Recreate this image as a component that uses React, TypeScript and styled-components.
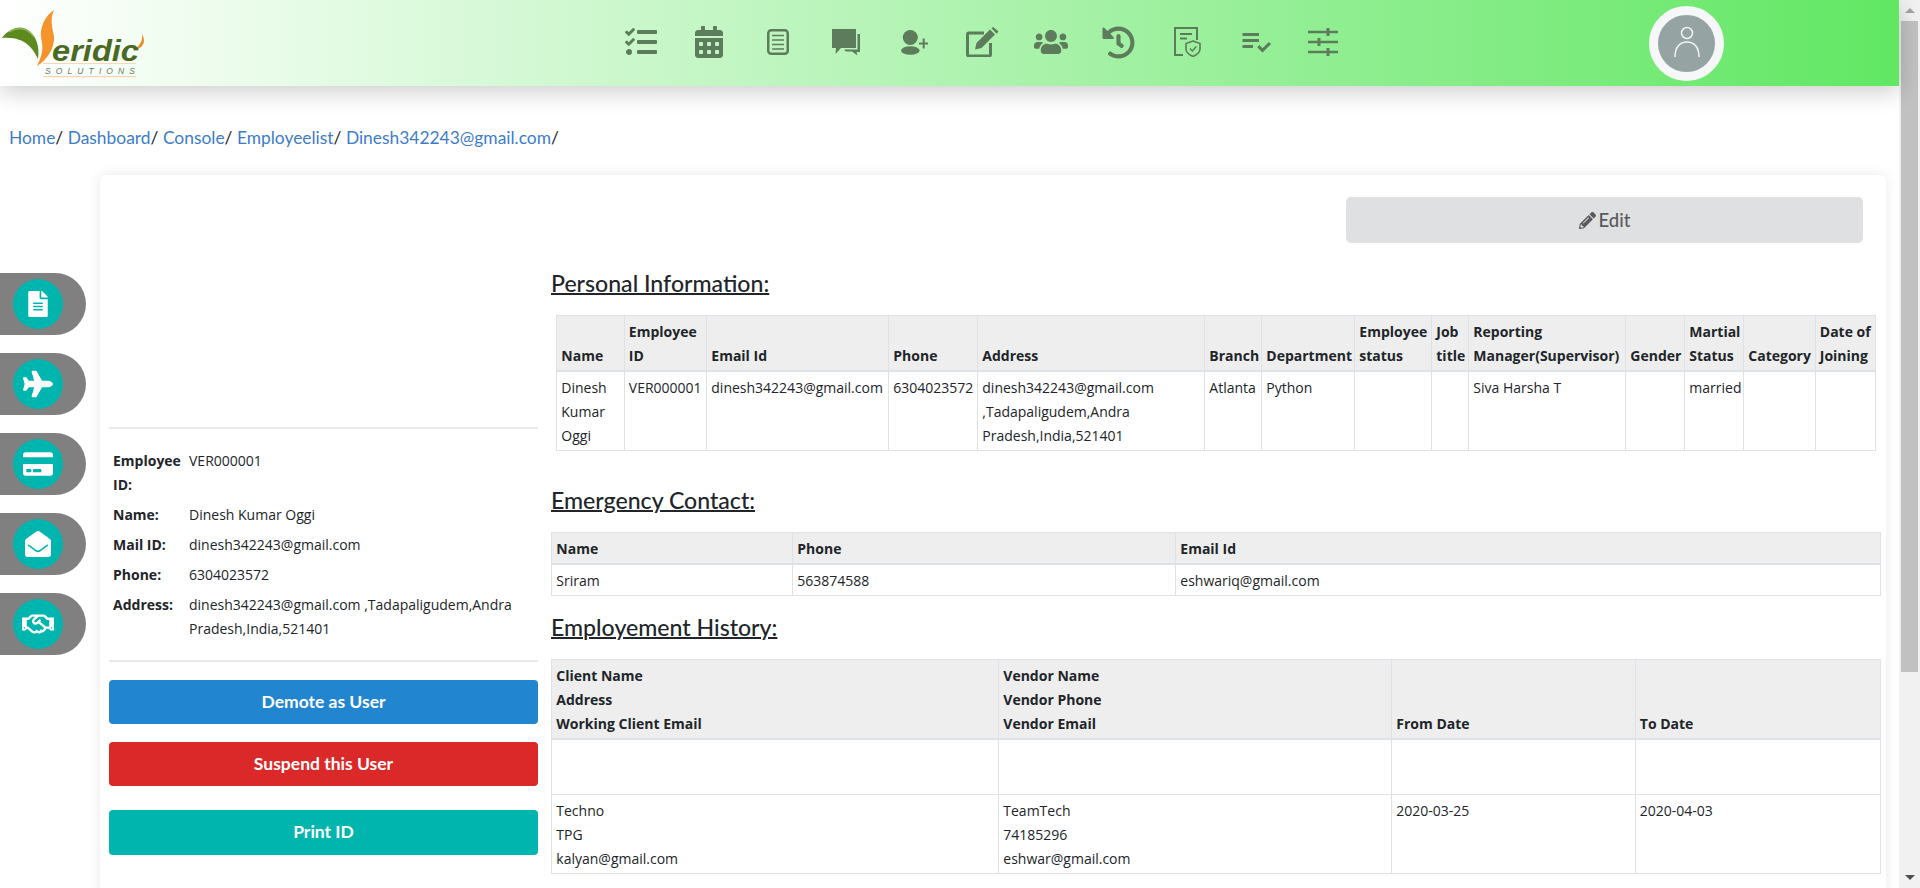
import React from 'react'
import styled, { createGlobalStyle } from 'styled-components'
import {
  FaTasks,
  FaCalendarAlt,
  FaUsers,
  FaHistory,
  FaPencilAlt,
  FaFileAlt,
  FaPlane,
  FaCreditCard,
  FaEnvelopeOpen,
  FaRegHandshake,
} from 'react-icons/fa'
import { MdPlaylistAddCheck } from 'react-icons/md'

const GlobalStyle = createGlobalStyle`
  html, body {
    margin: 0;
    padding: 0;
    height: 100%;
    overflow: hidden;
    background: #fff;
  }
  body {
    font-family: "Open Sans", "Liberation Sans", sans-serif;
    font-size: 14px;
    line-height: 24px;
    color: #212529;
  }
`

const Viewport = styled.div`
  display: flex;
  height: 888px;
  overflow: hidden;
`

const Page = styled.div`
  flex: 1;
  min-width: 0;
`

const Scrollbar = styled.div`
  width: 21px;
  flex: none;
  display: flex;
  flex-direction: column;
  background: #f1f1f1;
  padding: 0 2px;
  box-sizing: border-box;
`

const ScrollArrow = styled.div<{ $down?: boolean }>`
  height: 21px;
  flex: none;
  display: flex;
  align-items: center;
  justify-content: center;

  &::before {
    content: '';
    border-left: 5px solid transparent;
    border-right: 5px solid transparent;
    ${(p) => (p.$down ? 'border-top: 5px solid #505050;' : 'border-bottom: 5px solid #a3a3a3;')}
  }
`

const ScrollTrack = styled.div`
  flex: 1;
`

const ScrollThumb = styled.div`
  height: 651px;
  background: #c1c1c1;
`

const Header = styled.header`
  height: 86px;
  display: flex;
  align-items: center;
  background: linear-gradient(to right, #fff 0%, #61e763 100%);
  box-shadow: 0 6px 22px rgba(0, 0, 0, 0.2);
  position: relative;
`

const LogoBox = styled.div`
  width: 607px;
  flex: none;
  height: 86px;
`

const Nav = styled.nav`
  display: flex;
  width: 751px;
  flex: none;
`

const NavItem = styled.a`
  flex: 1;
  height: 86px;
  box-sizing: border-box;
  padding-bottom: 2px;
  display: flex;
  align-items: center;
  justify-content: center;
  color: #5c7c5c;
  font-size: 32px;
`

const Avatar = styled.div`
  margin-left: 291px;
  width: 75px;
  height: 75px;
  box-sizing: border-box;
  border: 9px solid #f5f7f8;
  border-radius: 50%;
  background: #95a3a3;
  display: flex;
  align-items: center;
  justify-content: center;
`

const Breadcrumb = styled.div`
  height: 89px;
  box-sizing: border-box;
  padding: 40px 0 0 9px;
  font-family: Lato, "Open Sans", sans-serif;
  font-size: 17.4px;
  line-height: 24px;
  color: #212529;

  a {
    color: #3d7cc9;
  }
`

const Main = styled.div`
  display: flex;
`

const SideTabs = styled.aside`
  width: 100px;
  flex: none;
  display: flex;
  flex-direction: column;
  gap: 18px;
  padding-top: 98px;
  box-sizing: border-box;
`

const SideTab = styled.a`
  width: 86px;
  height: 62px;
  display: flex;
  align-items: center;
  padding-left: 13px;
  box-sizing: border-box;
  background: #808080;
  border-radius: 0 31px 31px 0;
`

const TabCircle = styled.span`
  width: 50px;
  height: 50px;
  border-radius: 50%;
  background: #00b5ad;
  color: #fff;
  font-size: 26px;
  display: flex;
  align-items: center;
  justify-content: center;
`

const Card = styled.section`
  width: 1786px;
  min-height: 900px;
  box-sizing: border-box;
  display: grid;
  grid-template-columns: 429px 1fr;
  column-gap: 13px;
  padding: 22px 6px 0 9px;
  border-radius: 6px;
  background: #fff;
  box-shadow: 0 0 14px rgba(0, 0, 0, 0.09);
`

const Profile = styled.div`
  padding-top: 230px;
`

const Divider = styled.hr`
  margin: 0;
  border: 0;
  border-top: 2px solid #e9e9e9;
`

const InfoGrid = styled.dl`
  margin: 0;
  padding: 20px 0 19px 4px;
  display: grid;
  grid-template-columns: 76px 1fr;
  row-gap: 6px;
  font-size: 14px;
`

const InfoLabel = styled.dt`
  font-weight: 700;
`

const InfoValue = styled.dd`
  margin: 0;
`

const ActionButton = styled.button<{ $color: string; $top: number; $height?: number }>`
  display: block;
  width: 100%;
  height: ${(p) => p.$height ?? 44}px;
  margin-top: ${(p) => p.$top}px;
  padding: 0 0 2px;
  border: 0;
  border-radius: 4px;
  background: ${(p) => p.$color};
  color: #fff;
  font-family: Lato, sans-serif;
  font-size: 17.5px;
  font-weight: 700;
`

const Details = styled.div`
  min-width: 0;
`

const EditRow = styled.div`
  display: flex;
  justify-content: flex-end;
  padding-right: 17px;
`

const EditButton = styled.button`
  width: 517px;
  height: 46px;
  border: 0;
  border-radius: 5px;
  background: #dfe0e2;
  color: #5a5a5a;
  font-family: Lato, sans-serif;
  font-size: 18.5px;
  font-weight: 500;
  display: flex;
  align-items: center;
  justify-content: center;
  gap: 3px;

  svg {
    font-size: 17px;
  }
`

const SectionTitle = styled.h3<{ $top: number }>`
  margin: ${(p) => p.$top}px 0 16px;
  font-family: Lato, sans-serif;
  font-size: 23.1px;
  line-height: 32px;
  font-weight: 500;
  text-decoration: underline;
  text-decoration-thickness: 2px;
  color: #212529;
`

const DataTable = styled.table<{ $inset?: boolean }>`
  width: ${(p) => (p.$inset ? '1319px' : '1329px')};
  ${(p) => (p.$inset ? 'margin-left: 5px;' : '')}
  table-layout: fixed;
  border-collapse: collapse;
  font-size: 14px;
  line-height: 24px;

  th,
  td {
    padding: 3.6px 2px 2.4px 4.3px;
    border: 1px solid #dee2e6;
    vertical-align: top;
    text-align: left;
    box-sizing: border-box;
  }

  th {
    vertical-align: bottom;
    background: #eee;
    font-weight: 700;
    border-bottom-width: 2px;
  }
`

function CommentsIcon() {
  return (
    <svg width="28" height="26" viewBox="0 0 28 26" fill="currentColor">
      <path d="M0 0h24v19H9l-5.500 6 .5-6H0z" />
      <path d="M25.500 5H28v18h-3.500l1 3.500-5.500-4H14l-2-2h13.500z" />
    </svg>
  )
}

function NotesIcon() {
  return (
    <svg width="22" height="26" viewBox="0 0 22 26" fill="none" stroke="currentColor">
      <rect x="1.250" y="1.250" width="19.500" height="23.500" rx="3" strokeWidth="2.500" />
      <path d="M5 6.500h12M5 11h12M5 15.500h12M5 20h12" strokeWidth="1.500" />
    </svg>
  )
}

function UserPlusIcon() {
  return (
    <svg width="27" height="25" viewBox="0 0 27 25" fill="currentColor">
      <circle cx="9.300" cy="7.500" r="7.500" />
      <ellipse cx="9.300" cy="20.500" rx="9.300" ry="4.300" />
      <path d="M21.700 8.500h2V12.500h3.300v2h-3.300v4h-2v-4h-3.700v-2h3.700z" />
    </svg>
  )
}

function EditIcon() {
  return (
    <svg width="33" height="30" viewBox="0 0 33 30" fill="currentColor">
      <path
        d="M18 6H3a1.500 1.500 0 0 0-1.500 1.500v20A1.500 1.500 0 0 0 3 29h20a1.500 1.500 0 0 0 1.500-1.500V16"
        fill="none"
        stroke="currentColor"
        strokeWidth="3"
      />
      <path d="M9 22.500l1.500-6.500L24 2.500l5 5L15.500 21z" />
      <path d="M25.500 1.200l1.700-1.200 5.300 4.500-2 2.200z" />
    </svg>
  )
}

function DocShieldIcon() {
  return (
    <svg width="27" height="30" viewBox="0 0 27 30" fill="none" stroke="currentColor" strokeWidth="2">
      <path d="M9 28H1V1h22v12" />
      <path d="M6 7h12M6 11.500h7" />
      <path d="M19 14l7 2.500v5.500c0 3.500-3 5.800-7 7.500-4-1.700-7-4-7-7.500v-5.500z" strokeWidth="1.600" />
      <path d="M16 21.500l2.300 2.500 4-4.500" strokeWidth="1.500" />
    </svg>
  )
}

function SlidersIcon() {
  return (
    <svg width="31" height="30" viewBox="0 0 31 30" fill="none" stroke="currentColor">
      <path d="M0 5h30M0 15h30M0 25h30" strokeWidth="2.400" />
      <path d="M20 1v8M11 11v8M20 21v8" strokeWidth="3" />
    </svg>
  )
}

function Logo() {
  return (
    <svg width="150" height="86" viewBox="0 0 150 86">
      <path d="M2 38C8 29 20 24 28 30 36 35 40 47 38 59 33 48 24 36 2 38z" fill="#5c8a1e" />
      <path d="M9 32C17 27 27 27 34 37" fill="none" stroke="#9dbb5e" strokeWidth="1.200" />
      <path d="M54 10C45 16 40 27 41 37 42 44 45 50 37 66 47 60 55 48 54 36 52 27 50 19 54 10z" fill="#f5942a" />
      <path d="M142 34c1 6-2 11-7 16 5-1 9-5 9-9 0-3-1-5-2-7z" fill="#f08c24" />
      <text x="52" y="61" fontFamily="Liberation Sans" fontStyle="italic" fontWeight="700" fontSize="30" fill="#4a6a22" textLength="87" lengthAdjust="spacingAndGlyphs">
        eridic
      </text>
      <path d="M43 63.500h93M43 76.700h93" stroke="#fcd5b5" strokeWidth="1.200" />
      <text x="45" y="74" fontFamily="Liberation Sans" fontStyle="italic" fontSize="8.500" fill="#6f7a66" textLength="90">
        SOLUTIONS
      </text>
    </svg>
  )
}

const personalColumns = [67.5, 82.5, 182, 89, 227, 57, 93, 77, 37, 157, 59, 59, 71.5, 60]
const personalHeads = [
  'Name', 'Employee ID', 'Email Id', 'Phone', 'Address', 'Branch', 'Department', 'Employee status',
  'Job title', 'Reporting Manager(Supervisor)', 'Gender', 'Martial Status', 'Category', 'Date of Joining',
]
const personalRow = [
  'Dinesh Kumar Oggi', 'VER000001', 'dinesh342243@gmail.com', '6304023572',
  'dinesh342243@gmail.com ,Tadapaligudem,Andra Pradesh,India,521401', 'Atlanta', 'Python', '', '',
  'Siva Harsha T', '', 'married', '', '',
]

export default function App() {
  return (
    <Viewport>
      <GlobalStyle />
      <Page>
        <Header>
          <LogoBox><Logo /></LogoBox>
          <Nav>
            <NavItem><FaTasks /></NavItem>
            <NavItem><FaCalendarAlt /></NavItem>
            <NavItem><NotesIcon /></NavItem>
            <NavItem><CommentsIcon /></NavItem>
            <NavItem><UserPlusIcon /></NavItem>
            <NavItem><EditIcon /></NavItem>
            <NavItem><FaUsers size={34} /></NavItem>
            <NavItem><FaHistory size={33} /></NavItem>
            <NavItem><DocShieldIcon /></NavItem>
            <NavItem><MdPlaylistAddCheck size={36} /></NavItem>
            <NavItem><SlidersIcon /></NavItem>
          </Nav>
          <Avatar>
            <svg width="30" height="34" viewBox="0 0 30 34" fill="none" stroke="#f1f4f4" strokeWidth="1.500">
              <circle cx="15" cy="7" r="5.500" />
              <path d="M3 31c0-10 5-15 12-15s12 5 12 15" />
            </svg>
          </Avatar>
        </Header>
        <Breadcrumb>
          <a>Home</a>/ <a>Dashboard</a>/ <a>Console</a>/ <a>Employeelist</a>/ <a>Dinesh342243@gmail.com</a>/
        </Breadcrumb>
        <Main>
          <SideTabs>
            <SideTab><TabCircle><FaFileAlt /></TabCircle></SideTab>
            <SideTab><TabCircle><FaPlane size={30} /></TabCircle></SideTab>
            <SideTab><TabCircle><FaCreditCard size={30} /></TabCircle></SideTab>
            <SideTab><TabCircle><FaEnvelopeOpen /></TabCircle></SideTab>
            <SideTab><TabCircle><FaRegHandshake size={32} /></TabCircle></SideTab>
          </SideTabs>
          <Card>
            <Profile>
              <Divider />
              <InfoGrid>
                <InfoLabel>Employee ID:</InfoLabel>
                <InfoValue>VER000001</InfoValue>
                <InfoLabel>Name:</InfoLabel>
                <InfoValue>Dinesh Kumar Oggi</InfoValue>
                <InfoLabel>Mail ID:</InfoLabel>
                <InfoValue>dinesh342243@gmail.com</InfoValue>
                <InfoLabel>Phone:</InfoLabel>
                <InfoValue>6304023572</InfoValue>
                <InfoLabel>Address:</InfoLabel>
                <InfoValue>dinesh342243@gmail.com ,Tadapaligudem,Andra Pradesh,India,521401</InfoValue>
              </InfoGrid>
              <Divider />
              <ActionButton $color="#2185d0" $top={18}>Demote as User</ActionButton>
              <ActionButton $color="#db2828" $top={18}>Suspend this User</ActionButton>
              <ActionButton $color="#00b5ad" $top={24} $height={45}>Print ID</ActionButton>
            </Profile>
            <Details>
              <EditRow>
                <EditButton><FaPencilAlt />Edit</EditButton>
              </EditRow>
              <SectionTitle $top={24}>Personal Information:</SectionTitle>
              <DataTable $inset>
                <colgroup>
                  {personalColumns.map((w, i) => <col key={i} width={w} />)}
                </colgroup>
                <thead>
                  <tr>{personalHeads.map((h) => <th key={h}>{h}</th>)}</tr>
                </thead>
                <tbody>
                  <tr>{personalRow.map((c, i) => <td key={i}>{c}</td>)}</tr>
                </tbody>
              </DataTable>
              <SectionTitle $top={33}>Emergency Contact:</SectionTitle>
              <DataTable>
                <colgroup>
                  <col width={241} />
                  <col width={383} />
                  <col width={705} />
                </colgroup>
                <thead>
                  <tr><th>Name</th><th>Phone</th><th>Email Id</th></tr>
                </thead>
                <tbody>
                  <tr><td>Sriram</td><td>563874588</td><td>eshwariq@gmail.com</td></tr>
                </tbody>
              </DataTable>
              <SectionTitle $top={15}>Employement History:</SectionTitle>
              <DataTable>
                <colgroup>
                  <col width={447} />
                  <col width={393} />
                  <col width={243.5} />
                  <col width={245.5} />
                </colgroup>
                <thead>
                  <tr>
                    <th>Client Name<br />Address<br />Working Client Email</th>
                    <th>Vendor Name<br />Vendor Phone<br />Vendor Email</th>
                    <th>From Date</th>
                    <th>To Date</th>
                  </tr>
                </thead>
                <tbody>
                  <tr>
                    <td><br /><br /></td>
                    <td><br /><br /></td>
                    <td></td>
                    <td></td>
                  </tr>
                  <tr>
                    <td>Techno<br />TPG<br />kalyan@gmail.com</td>
                    <td>TeamTech<br />74185296<br />eshwar@gmail.com</td>
                    <td>2020-03-25</td>
                    <td>2020-04-03</td>
                  </tr>
                </tbody>
              </DataTable>
            </Details>
          </Card>
        </Main>
      </Page>
      <Scrollbar>
        <ScrollArrow />
        <ScrollThumb />
        <ScrollTrack />
        <ScrollArrow $down />
      </Scrollbar>
    </Viewport>
  )
}
